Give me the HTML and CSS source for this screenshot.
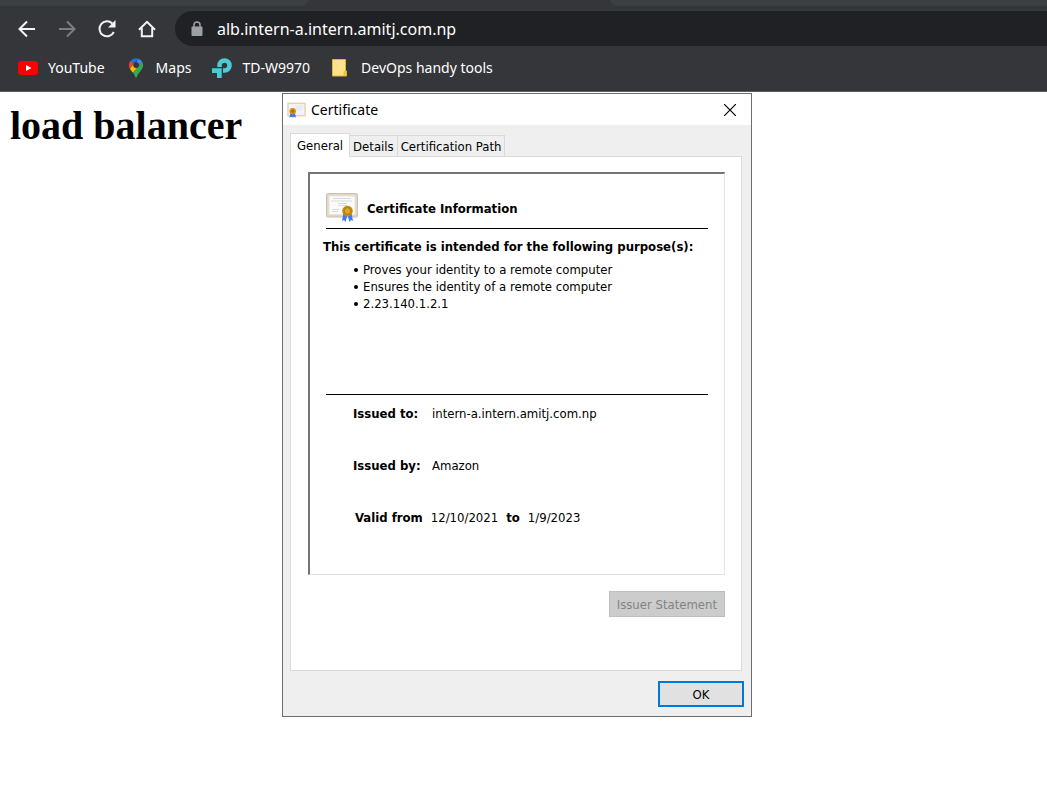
FILE: index.html
```html
<!DOCTYPE html>
<html lang="en">
<head>
<meta charset="utf-8">
<meta name="viewport" content="width=device-width, initial-scale=1">
<title>load balancer</title>
<link rel="stylesheet" href="styles.css">
</head>
<body>
<header class="browser">
  <div class="tabstrip">
    <div class="strip-left"></div>
    <div class="strip-active"></div>
    <div class="strip-right"></div>
  </div>
  <div class="toolbar">
    <nav class="nav-buttons" aria-label="Navigation">
      <button class="nav-button" aria-label="Back"><svg viewBox="0 0 20 20"><path d="M18 10H3M10 2.500L2.500 10l7.500 7.500"/></svg></button>
      <button class="nav-button nav-disabled" aria-label="Forward" disabled><svg viewBox="0 0 20 20"><path d="M2 10h15M10 2.500l7.500 7.500-7.500 7.500"/></svg></button>
      <button class="nav-button" aria-label="Reload"><svg viewBox="0 0 20 20"><path d="M16.800 13a7.500 7.500 0 1 1-1.500-8.500"/><path class="solid" d="M18.500 1v7.500h-7.500z"/></svg></button>
      <button class="nav-button" aria-label="Home"><svg viewBox="0 0 20 20"><path d="M2 10.800L10 2.800l8 8M4.800 9v8.200h10.400V9"/></svg></button>
    </nav>
    <div class="omnibox">
      <svg class="lock" viewBox="0 0 12 16" aria-hidden="true"><rect x="0.500" y="5.500" width="11" height="9.500" rx="1" fill="#9aa0a6"/><path d="M3 6V4a3 3 0 0 1 6 0v2" fill="none" stroke="#9aa0a6" stroke-width="1.500"/></svg>
      <input class="address" type="text" aria-label="Address" value="alb.intern-a.intern.amitj.com.np">
    </div>
  </div>
  <nav class="bookmarks" aria-label="Bookmarks">
    <a class="bookmark" href="#"><svg class="bookmark-icon" viewBox="0 0 20 20" aria-hidden="true"><rect x="0" y="3" width="20" height="14" rx="3" fill="#f00"/><path d="M8 7l5.500 3L8 13z" fill="#fff"/></svg>YouTube</a>
    <a class="bookmark" href="#"><svg class="bookmark-icon" viewBox="0 0 20 20" aria-hidden="true">
      <path d="M10 0.300a7 7 0 0 0-5.400 2.500L8 5.600l4.400-4.900A7 7 0 0 0 10 .3z" fill="#1a73e8"/>
      <path d="M4.600 2.800A7 7 0 0 0 3.900 10.800L8 5.600z" fill="#ea4335"/>
      <path d="M12.400.7L10 4.800l2.300 3.900 4-4.600A7 7 0 0 0 12.400.7z" fill="#4285f4"/>
      <path d="M3.900 10.800c.8 1.600 1.900 2.700 3 4L12.300 8.700 8 5.600z" fill="#fbbc04"/>
      <path d="M16.300 4.100L6.900 14.800c1.100 1.400 1.900 2.600 2.300 4.300q.8 1.400 1.600 0c.9-3.500 3.300-5.100 5-7.900a7 7 0 0 0 .5-7.100z" fill="#34a853"/>
      <circle cx="10.100" cy="7.100" r="2.900" fill="#35363a"/></svg>Maps</a>
    <a class="bookmark" href="#"><svg class="bookmark-icon" viewBox="0 0 20 20" aria-hidden="true"><path d="M7.500 9V7.500a5 5 0 1 1 5 5H11" fill="none" stroke="#4acbd6" stroke-width="4.600"/><path d="M0 10.300h9.700v9.700H5v-5H0z" fill="#4acbd6"/></svg>TD-W9970</a>
    <a class="bookmark" href="#"><svg class="bookmark-icon" viewBox="0 0 20 20" aria-hidden="true"><path d="M1.500 1.500h13V13h1v5h-14z" fill="#ffe28a" stroke="#dbb640"/><path d="M12.500 18v-4.500l2.500-1.500v6z" fill="#f1c232"/></svg>DevOps handy tools</a>
  </nav>
</header>

<main class="page">
  <h1 class="page-title">load balancer</h1>
</main>

<section class="dialog" role="dialog" aria-labelledby="dialog-title">
  <header class="titlebar">
    <svg class="title-icon" viewBox="0 0 20 16" aria-hidden="true">
      <rect x="1" y="1" width="18" height="13" fill="#f5f5f5" stroke="#ead1ac" stroke-width="1.500"/>
      <path d="M9 4h8M9 6h8M9 8h7" stroke="#e4e4e8"/>
      <path d="M4 10l-1.500 6 2-.8L6 16l.5-5zM8 10l1.500 6-2-.8L6.500 16 6 11z" fill="#3577e5"/>
      <circle cx="6" cy="9.200" r="3.400" fill="#d29313"/><circle cx="6" cy="9.200" r="1.500" fill="#a86f04"/>
    </svg>
    <h2 class="dialog-title" id="dialog-title">Certificate</h2>
    <button class="close" aria-label="Close"><svg viewBox="0 0 12 12"><path d="M0 0l12 12M12 0L0 12" stroke="#000" stroke-width="1.200"/></svg></button>
  </header>
  <div class="dialog-body">
    <div class="tabs" role="tablist">
      <button class="tab tab-selected" role="tab" aria-selected="true">General</button>
      <button class="tab" role="tab" aria-selected="false">Details</button>
      <button class="tab" role="tab" aria-selected="false">Certification Path</button>
    </div>
    <div class="panel" role="tabpanel">
      <div class="certificate">
        <div class="certificate-head">
          <svg class="certificate-icon" viewBox="0 0 32 30" aria-hidden="true">
            <rect x="0.500" y="0.500" width="31" height="23.500" rx="1" fill="#ded6c8" stroke="#cbc2b4"/>
            <rect x="3" y="3" width="26" height="18.500" fill="#fbfbf9" stroke="#e9e4d9"/>
            <path d="M7 5.500h18M5 8h21M12 10.500h9M12 12.500h9M6 16.500h7M6 18.500h6" stroke="#d6d9e2" fill="none"/>
            <path d="M17.500 20l-1.500 8 2-1 1.500 2 2-7zM25.500 20l1.500 8-2-1-1.500 2-2-7z" fill="#3f7be8"/>
            <circle cx="21.500" cy="18" r="5.300" fill="#c68a0e"/>
            <circle cx="21.500" cy="18" r="3.300" fill="#d9a52e" stroke="#a87408" stroke-width="0.800"/>
          </svg>
          <h3 class="strong">Certificate Information</h3>
        </div>
        <div class="purposes">
          <h4 class="strong">This certificate is intended for the following purpose(s):</h4>
          <ul class="purpose-list">
            <li>Proves your identity to a remote computer</li>
            <li>Ensures the identity of a remote computer</li>
            <li>2.23.140.1.2.1</li>
          </ul>
        </div>
        <dl class="facts">
          <div class="fact"><dt class="strong">Issued to:</dt><dd>intern-a.intern.amitj.com.np</dd></div>
          <div class="fact"><dt class="strong">Issued by:</dt><dd>Amazon</dd></div>
          <div class="fact fact-dates"><dt class="strong">Valid from</dt><dd>12/10/2021</dd><dt class="strong">to</dt><dd>1/9/2023</dd></div>
        </dl>
      </div>
      <button class="button button-issuer" disabled>Issuer Statement</button>
    </div>
    <div class="actions"><button class="button button-ok">OK</button></div>
  </div>
</section>
</body>
</html>
```
FILE: styles.css
```css
* { box-sizing: border-box; }

body {
  margin: 0;
  background: #fff;
  color: #000;
  font-family: "Liberation Serif", serif;
}

h1, h2, h3, h4, ul, dl, dd { margin: 0; padding: 0; }
button, input { margin: 0; padding: 0; border: 0; background: none; font: inherit; color: inherit; }
svg { display: block; }

.browser {
  background: #35363a;
  border-bottom: 1px solid #5b5c60;
  color: #fff;
  font-family: "Noto Sans", sans-serif;
}

.tabstrip { display: grid; grid-template-columns: 308px 302px 1fr; height: 6px; }
.strip-left { background: #3c4043; border-bottom-right-radius: 8px 6px; }
.strip-right { background: #3c4043; border-bottom-left-radius: 8px 6px; }

.toolbar { display: flex; align-items: center; gap: 18px; padding: 5px 0 0 17px; }
.nav-buttons { display: flex; gap: 20px; }
.nav-button { width: 20px; height: 20px; color: #f1f3f4; }
.nav-button svg { width: 20px; height: 20px; fill: none; stroke: currentColor; stroke-width: 2; }
.nav-button .solid { fill: currentColor; stroke: none; }
.nav-disabled { color: #7d7e82; }

.omnibox {
  display: flex;
  flex: 1;
  align-items: center;
  gap: 14px;
  height: 35px;
  padding-left: 16px;
  border-radius: 18px 0 0 18px;
  background: #202124;
}
.lock { width: 12px; height: 16px; }
.address { flex: 1; min-width: 0; height: 28px; font-size: 16px; }

.bookmarks { display: flex; gap: 21px; height: 45px; padding: 0 18px 1px; align-items: center; }
.bookmark { display: flex; align-items: center; gap: 10px; color: inherit; font-size: 14px; line-height: 20px; text-decoration: none; white-space: nowrap; }
.bookmark-icon { width: 20px; height: 20px; }

.page { padding: 11px 10px; }
.page-title { font-size: 40px; line-height: 46px; }

.dialog {
  position: absolute;
  top: 93px;
  left: 282px;
  width: 470px;
  border: 1px solid #6e6e6e;
  background: #efefef;
  font-family: "DejaVu Sans Condensed", "DejaVu Sans", sans-serif;
  font-size: 13px;
  line-height: 17px;
}
.titlebar { display: flex; align-items: center; gap: 5px; height: 31px; padding: 0 15px 0 4px; background: #fff; }
.title-icon { width: 19px; height: 16px; }
.dialog-title { flex: 1; font: 14px/20px "Noto Sans", sans-serif; }
.close { width: 12px; height: 12px; }
.close svg { width: 12px; height: 12px; }

.dialog-body { padding: 8px 7px 9px; }
.tabs { display: flex; align-items: flex-end; }
.tab { height: 21px; padding: 0 3px; border: 1px solid #d9d9d9; border-width: 1px 1px 0 0; white-space: nowrap; }
.tab-selected { position: relative; height: 24px; margin-bottom: -1px; padding: 0 6px; border-left-width: 1px; background: #fff; }
.panel { display: flex; flex-direction: column; align-items: flex-end; margin-right: 2px; padding: 15px 16px 53px 17px; border: 1px solid #d9d9d9; background: #fff; }

.certificate {
  align-self: stretch;
  padding: 19px 16px 48px;
  border: 1px solid #e3e3e3;
  border-top: 2px solid #757575;
  border-left: 2px solid #757575;
}
.certificate-head { display: flex; align-items: flex-start; gap: 9px; height: 36px; border-bottom: 1px solid #000; }
.certificate-head .strong { padding-top: 7px; }
.certificate-icon { width: 32px; height: 30px; }
.strong { font-size: 13px; font-weight: bold; }
.purposes { height: 165px; padding-top: 9px; margin-left: -3px; }
.purpose-list { margin-top: 6px; padding-left: 31px; list-style: none; }
.purpose-list li { display: flex; align-items: center; gap: 5px; }
.purpose-list li::before { content: ""; width: 4px; height: 4px; border-radius: 50%; background: #000; }

.facts { display: grid; gap: 35px; padding: 10px 0 0 27px; border-top: 1px solid #000; }
.fact { display: grid; grid-template-columns: 79px 1fr; }
.fact-dates { display: flex; gap: 8px; padding-left: 2px; }

.button { border: 1px solid #bfbfbf; background: #ccc; color: #838383; text-align: center; }
.button-issuer { height: 26px; margin-top: 16px; padding: 0 7px; }
.actions { display: flex; justify-content: flex-end; padding-top: 10px; }
.button-ok { width: 86px; height: 26px; border: 2px solid #0078d7; background: #e1e1e1; color: #000; }
```
